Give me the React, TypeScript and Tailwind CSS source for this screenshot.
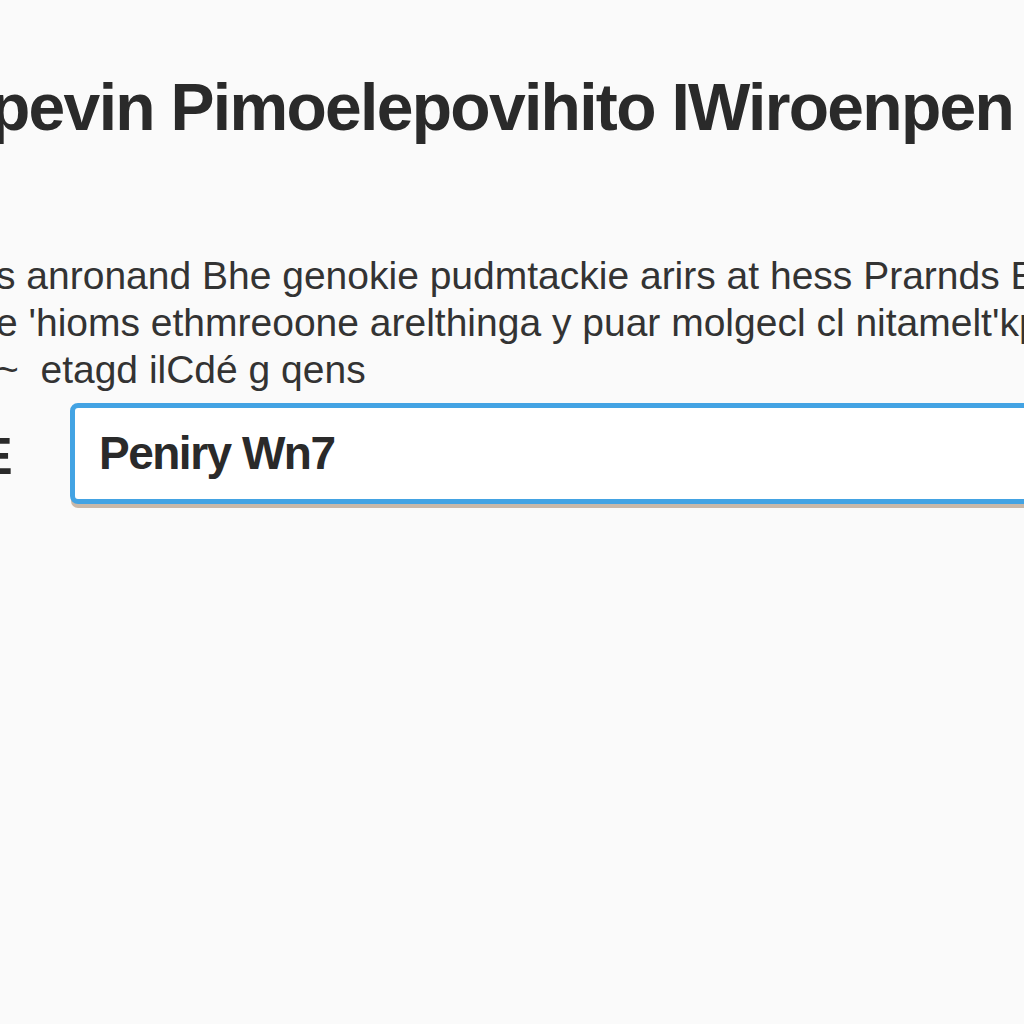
export default function App() {
  return (
    <div className="min-h-[1024px] w-[1024px] overflow-hidden bg-[#fafafa] font-['Liberation_Sans',Arial,sans-serif] text-[#2b2b2b]">
      {/* Title */}
      <h1 className="-ml-[10px] mt-[74px] whitespace-nowrap text-[66px] font-bold leading-none tracking-[-1.7px] text-[#2a2a2a]">
        pevin Pimoelepovihito IWiroenpen
      </h1>

      {/* Description */}
      <div className="mt-[112px] -ml-[4px] whitespace-nowrap text-[39px] leading-[47px] tracking-[0px] text-[#333]">
        <p>s anronand Bhe genokie pudmtackie arirs at hess Prarnds E</p>
        <p>e 'hioms ethmreoone arelthinga y puar molgecl cl nitamelt'kpcear</p>
        <p>~&nbsp;&nbsp;etagd ilCdé g qens</p>
      </div>

      {/* Input row */}
      <div className="mt-[10px] flex items-center">
        <span className="-ml-[22px] w-[92px] text-[52px] font-bold leading-none text-[#2a2a2a]">E</span>
        <div className="relative h-[106px] flex-1 -mr-[40px]">
          <div className="flex h-[101px] items-center rounded-[8px] border-[5px] border-[#43a3e3] bg-white pl-[24px] shadow-[0_5px_0_-1px_#c9b8a8]">
            <span className="text-[46px] font-bold tracking-[-1.5px] text-[#2a2a2a]">Peniry Wn7</span>
          </div>
        </div>
      </div>
    </div>
  );
}
